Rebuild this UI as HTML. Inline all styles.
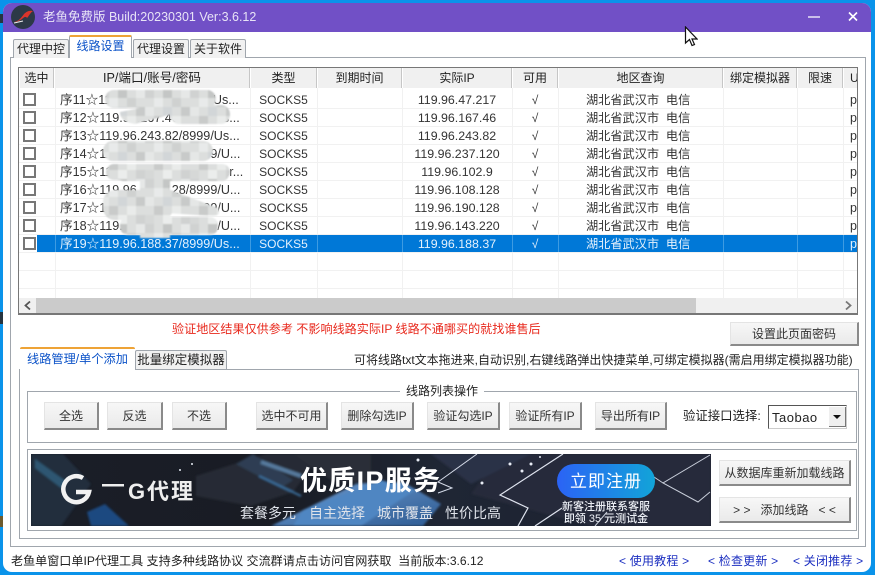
<!DOCTYPE html>
<html lang="zh"><head><meta charset="utf-8"><title>老鱼免费版</title>
<style>
*{box-sizing:border-box}
html,body{margin:0;padding:0}
body{width:875px;height:575px;overflow:hidden;position:relative;background:#0a93ea;font:12px "Liberation Sans","Noto Sans CJK SC",sans-serif;color:#222}
div,span{position:absolute;white-space:nowrap}
#win{left:3px;top:3px;width:868px;height:569px;background:#fff;border-radius:9px;overflow:hidden}
#title{left:0;top:0;width:868px;height:29px;background:#7150c6;color:#e8e4f6;font-size:13px;line-height:29px}
.box{border:1px solid #a0a6ad;background:#fff}
.tab{border:1px solid #a0a6ad;border-bottom:0;background:#f1f1f1;text-align:center;font-size:12px;line-height:19px;border-radius:2px 2px 0 0}
.act{background:#fff;color:#0b52c8;border-top:2px solid #eea336}
.hd{top:68px;height:20px;background:#f0f0f0;border-right:1px solid #c6c6c6;border-left:1px solid #fff;text-align:center;line-height:21px;font-size:12px}
.v{top:88px;width:1px;height:210px;background:#f1f1f1}
.h{left:19px;width:838px;height:1px;background:#f1f1f1}
.c{height:18px;line-height:18px;font-size:12px;color:#333}
.k{left:23px;width:13px;height:13px;border:2px solid #777;background:#fff}
.ip{left:60px;font-size:12.6px}.ty{left:250px;width:67px;text-align:center;font-size:12px}.ri{left:402px;width:110px;text-align:center;font-size:12.4px}
.ok{left:512px;width:46px;text-align:center}.ar{left:586px;font-size:12.2px}.p{left:850px;width:8px;overflow:hidden;font-size:12.5px}
.btn{background:linear-gradient(#f7f7f7,#eaeaea);border:1px solid #e4e4e4;border-right:2px solid #8a8a8a;border-bottom:2px solid #8a8a8a;text-align:center;font-size:12px;color:#333}
.b1{top:402px;height:28px;line-height:26px}
.lnk{top:553px;color:#1c2fc0;font-size:12px;line-height:16px;letter-spacing:.2px}
</style></head><body>
<div style="left:0;top:312px;width:3px;height:12px;background:#26343f"></div>
<div style="left:0;top:516px;width:3px;height:11px;background:#6d5a2d"></div>
<div style="left:0;top:14px;width:3px;height:9px;background:#26343f"></div>
<div id="win">
<div id="title"><span style="left:40px;top:0;font-size:12.5px">老鱼免费版 Build:20230301 Ver:3.6.12</span>
<div style="left:8px;top:2px;width:24px;height:24px;border-radius:50%;background:#2c3947"></div>
<svg style="position:absolute;left:8px;top:2px" width="24" height="24"><path d="M3 17C8 16 10 13 13 9C15 7 18 5 22 6C19 8 18 11 16 13C15 11 13 12 11 14C8 16 6 17 3 17Z" fill="#d9342b"/><path d="M3 18L12 16" stroke="#eee" stroke-width="1"/></svg>
<svg style="position:absolute;left:805px;top:7px" width="50" height="14"><path d="M0 7H12" stroke="#fff" stroke-width="1.2"/><path d="M41 2.500L49 10.500M49 2.500L41 10.500" stroke="#fff" stroke-width="1.6"/></svg>
</div></div>

<div class="box" style="left:10px;top:57px;width:856px;height:490px"></div>
<div class="tab" style="left:13px;top:39px;width:56px;height:19px">代理中控</div>
<div class="tab act" style="left:69px;top:35px;width:63px;height:23px;border-bottom:0">线路设置</div>
<div class="tab" style="left:133px;top:39px;width:56px;height:19px">代理设置</div>
<div class="tab" style="left:190px;top:39px;width:56px;height:19px">关于软件</div>

<div style="left:18px;top:67px;width:840px;height:248px;border:1px solid #777;border-bottom:2px solid #777;background:#fff"></div>
<div class="hd" style="left:19px;width:35px">选中</div>
<div class="hd" style="left:54px;width:196px;font-size:12.6px">IP/端口/账号/密码</div>
<div class="hd" style="left:250px;width:67px">类型</div>
<div class="hd" style="left:317px;width:85px">到期时间</div>
<div class="hd" style="left:402px;width:110px">实际IP</div>
<div class="hd" style="left:512px;width:46px">可用</div>
<div class="hd" style="left:558px;width:165px">地区查询</div>
<div class="hd" style="left:723px;width:74px">绑定模拟器</div>
<div class="hd" style="left:797px;width:46px">限速</div>
<div class="hd" style="left:843px;width:14px;border-right:0;text-align:left;padding-left:6px;overflow:hidden">U</div>

<div class="v" style="left:55px"></div><div class="v" style="left:250px"></div><div class="v" style="left:317px"></div><div class="v" style="left:402px"></div><div class="v" style="left:512px"></div><div class="v" style="left:558px"></div><div class="v" style="left:723px"></div><div class="v" style="left:797px"></div><div class="v" style="left:843px"></div>
<div class="h" style="top:108px"></div><div class="h" style="top:126px"></div><div class="h" style="top:144px"></div><div class="h" style="top:162px"></div><div class="h" style="top:180px"></div><div class="h" style="top:198px"></div><div class="h" style="top:216px"></div><div class="h" style="top:234px"></div><div class="h" style="top:252px"></div><div class="h" style="top:270px"></div><div class="h" style="top:288px"></div>

<div class="k" style="top:93px"></div><span class="c ip" style="top:91px">序11☆119.96.47.217/8999/Us...</span><span class="c ty" style="top:91px">SOCKS5</span><span class="c ri" style="top:91px">119.96.47.217</span><span class="c ok" style="top:91px">√</span><span class="c ar" style="top:91px">湖北省武汉市&nbsp; 电信</span><span class="c p" style="top:91px">p</span>
<div class="k" style="top:111px"></div><span class="c ip" style="top:109px">序12☆119.96.167.46/8999/Us...</span><span class="c ty" style="top:109px">SOCKS5</span><span class="c ri" style="top:109px">119.96.167.46</span><span class="c ok" style="top:109px">√</span><span class="c ar" style="top:109px">湖北省武汉市&nbsp; 电信</span><span class="c p" style="top:109px">p</span>
<div class="k" style="top:129px"></div><span class="c ip" style="top:127px">序13☆119.96.243.82/8999/Us...</span><span class="c ty" style="top:127px">SOCKS5</span><span class="c ri" style="top:127px">119.96.243.82</span><span class="c ok" style="top:127px">√</span><span class="c ar" style="top:127px">湖北省武汉市&nbsp; 电信</span><span class="c p" style="top:127px">p</span>
<div class="k" style="top:147px"></div><span class="c ip" style="top:145px">序14☆119.96.237.120/8999/U...</span><span class="c ty" style="top:145px">SOCKS5</span><span class="c ri" style="top:145px">119.96.237.120</span><span class="c ok" style="top:145px">√</span><span class="c ar" style="top:145px">湖北省武汉市&nbsp; 电信</span><span class="c p" style="top:145px">p</span>
<div class="k" style="top:165px"></div><span class="c ip" style="top:163px">序15☆119.96.102.9/8999/User...</span><span class="c ty" style="top:163px">SOCKS5</span><span class="c ri" style="top:163px">119.96.102.9</span><span class="c ok" style="top:163px">√</span><span class="c ar" style="top:163px">湖北省武汉市&nbsp; 电信</span><span class="c p" style="top:163px">p</span>
<div class="k" style="top:183px"></div><span class="c ip" style="top:181px">序16☆119.96.108.128/8999/U...</span><span class="c ty" style="top:181px">SOCKS5</span><span class="c ri" style="top:181px">119.96.108.128</span><span class="c ok" style="top:181px">√</span><span class="c ar" style="top:181px">湖北省武汉市&nbsp; 电信</span><span class="c p" style="top:181px">p</span>
<div class="k" style="top:201px"></div><span class="c ip" style="top:199px">序17☆119.96.190.128/8999/U...</span><span class="c ty" style="top:199px">SOCKS5</span><span class="c ri" style="top:199px">119.96.190.128</span><span class="c ok" style="top:199px">√</span><span class="c ar" style="top:199px">湖北省武汉市&nbsp; 电信</span><span class="c p" style="top:199px">p</span>
<div class="k" style="top:219px"></div><span class="c ip" style="top:217px">序18☆119.96.143.220/8999/U...</span><span class="c ty" style="top:217px">SOCKS5</span><span class="c ri" style="top:217px">119.96.143.220</span><span class="c ok" style="top:217px">√</span><span class="c ar" style="top:217px">湖北省武汉市&nbsp; 电信</span><span class="c p" style="top:217px">p</span>
<div style="left:37px;top:235px;width:820px;height:17px;background:#0078d7"></div>
<div style="left:55px;top:235px;width:1px;height:17px;background:#3d9be2"></div><div style="left:250px;top:235px;width:1px;height:17px;background:#3d9be2"></div><div style="left:317px;top:235px;width:1px;height:17px;background:#3d9be2"></div><div style="left:402px;top:235px;width:1px;height:17px;background:#3d9be2"></div><div style="left:512px;top:235px;width:1px;height:17px;background:#3d9be2"></div><div style="left:558px;top:235px;width:1px;height:17px;background:#3d9be2"></div><div style="left:723px;top:235px;width:1px;height:17px;background:#3d9be2"></div><div style="left:797px;top:235px;width:1px;height:17px;background:#3d9be2"></div><div style="left:843px;top:235px;width:1px;height:17px;background:#3d9be2"></div>
<div class="k" style="top:237px"></div>
<span class="c ip" style="top:235px;color:#e4f1fc">序19☆119.96.188.37/8999/Us...</span><span class="c ty" style="top:235px;color:#e4f1fc">SOCKS5</span><span class="c ri" style="top:235px;color:#e4f1fc">119.96.188.37</span><span class="c ok" style="top:235px;color:#e4f1fc">√</span><span class="c ar" style="top:235px;color:#e4f1fc">湖北省武汉市&nbsp; 电信</span><span class="c p" style="top:235px;color:#e4f1fc">p</span>

<svg style="position:absolute;left:0;top:0" width="875" height="260">
<defs>
<pattern id="m" width="45" height="45" patternUnits="userSpaceOnUse" x="100" y="89">
<rect width="45" height="45" fill="#dcdedd"/>
<rect x="0" y="0" width="9" height="9" fill="#d0d2d1"/><rect x="18" y="0" width="9" height="9" fill="#c4c6c5"/><rect x="36" y="0" width="9" height="9" fill="#e6e8e7"/>
<rect x="9" y="9" width="9" height="9" fill="#e8eaea"/><rect x="27" y="9" width="9" height="9" fill="#cfd1d0"/>
<rect x="0" y="18" width="9" height="9" fill="#e5e7e6"/><rect x="18" y="18" width="9" height="9" fill="#d2d6d8"/><rect x="36" y="18" width="9" height="9" fill="#c8cac9"/>
<rect x="9" y="27" width="9" height="9" fill="#c9cbca"/><rect x="27" y="27" width="9" height="9" fill="#e9ebea"/>
<rect x="0" y="36" width="9" height="9" fill="#d6d8d7"/><rect x="18" y="36" width="9" height="9" fill="#ebedec"/><rect x="36" y="36" width="9" height="9" fill="#d0d2d1"/>
</pattern>
<filter id="bl"><feGaussianBlur stdDeviation="0.7"/></filter>
</defs>
<g fill="url(#m)" filter="url(#bl)">
<rect x="105" y="90" width="111" height="18" rx="9"/>
<rect x="128" y="100" width="60" height="8" rx="4"/>
<path d="M120 112L170 102L180 112L135 124Q120 122 120 112Z"/>
<rect x="170" y="105" width="60" height="19" rx="9"/>
<rect x="103" y="141" width="110" height="20" rx="10"/>
<rect x="106" y="164" width="124" height="16" rx="8"/>
<rect x="118" y="170" width="110" height="11" rx="5"/>
<rect x="140" y="178" width="30" height="60"/>
<rect x="103" y="190" width="70" height="30" rx="12"/>
<path d="M160 186L218 208Q222 216 212 216L150 212Z"/>
<rect x="120" y="217" width="98" height="18" rx="8"/>
</g>
</svg>

<div style="left:19px;top:298px;width:838px;height:15px;background:#f0f0f0"></div>
<div style="left:36px;top:298px;width:660px;height:15px;background:#cbcbcb"></div>
<svg style="position:absolute;left:19px;top:298px" width="838" height="15"><path d="M11 3.500L6.500 7.500L11 11.500" fill="none" stroke="#555" stroke-width="1.8"/><path d="M827 3.500L831.500 7.500L827 11.500" fill="none" stroke="#777" stroke-width="1.8"/></svg>

<span style="left:172px;top:321px;color:#e8281c;font-size:12.1px;line-height:16px">验证地区结果仅供参考 不影响线路实际IP 线路不通哪买的就找谁售后</span>
<div class="btn" style="left:730px;top:322px;width:129px;height:24px;line-height:22px">设置此页面密码</div>

<div class="box" style="left:19px;top:369px;width:840px;height:170px"></div>
<div class="tab act" style="left:20px;top:347px;width:115px;height:23px;line-height:20px;border-right:0;border-left:0;font-size:12.2px">线路管理/单个添加</div>
<div class="tab" style="left:135px;top:350px;width:92px;height:19px;font-size:12.5px;line-height:18px">批量绑定模拟器</div>
<span style="left:354px;top:352px;line-height:16px;font-size:12px">可将线路txt文本拖进来,自动识别,右键线路弹出快捷菜单,可绑定模拟器(需启用绑定模拟器功能)</span>

<div class="box" style="left:27px;top:391px;width:830px;height:52px"></div>
<span style="left:400px;top:384px;background:#fff;padding:0 6px;line-height:15px;font-size:12px">线路列表操作</span>
<div class="btn b1" style="left:44px;width:55px">全选</div>
<div class="btn b1" style="left:107px;width:56px">反选</div>
<div class="btn b1" style="left:172px;width:55px">不选</div>
<div class="btn b1" style="left:256px;width:72px">选中不可用</div>
<div class="btn b1" style="left:341px;width:73px">删除勾选IP</div>
<div class="btn b1" style="left:427px;width:73px">验证勾选IP</div>
<div class="btn b1" style="left:509px;width:73px">验证所有IP</div>
<div class="btn b1" style="left:595px;width:72px">导出所有IP</div>
<span style="left:683px;top:408px;line-height:16px;font-size:12.4px">验证接口选择:</span>
<div style="left:768px;top:405px;width:79px;height:24px;border:1px solid #555;border-right-color:#ccc;border-bottom-color:#ccc;background:#fff;font-size:13px;line-height:24px;padding-left:3px;letter-spacing:.5px">Taobao</div>
<div style="left:829px;top:407px;width:17px;height:20px;background:#efefef;border-right:1px solid #777;border-bottom:1px solid #777"></div>
<svg style="position:absolute;left:833px;top:415px" width="10" height="6"><path d="M0 0H8L4 4Z" fill="#111"/></svg>

<div class="box" style="left:27px;top:449px;width:830px;height:82px"></div>
<svg style="position:absolute;left:31px;top:454px" width="680" height="72" viewBox="0 0 680 72">
<defs>
<linearGradient id="bg" x1="0" x2="1"><stop offset="0" stop-color="#1a1e28"/><stop offset=".35" stop-color="#191c24"/><stop offset=".6" stop-color="#1f2634"/><stop offset="1" stop-color="#1b2030"/></linearGradient>
<linearGradient id="reg" x1="0" x2="1"><stop offset="0" stop-color="#2b63f5"/><stop offset="1" stop-color="#12a4d8"/></linearGradient>
<linearGradient id="blu" x1="0" y1="0" x2="1" y2="1"><stop offset="0" stop-color="#6f9bcf"/><stop offset="1" stop-color="#2e5c94"/></linearGradient>
<filter id="sb"><feGaussianBlur stdDeviation="1"/></filter>
</defs>
<rect width="680" height="72" fill="url(#bg)"/>
<g filter="url(#sb)">
<path d="M0 0H32L60 30L30 72H0Z" fill="#212e3d"/>
<path d="M4 5L36 28L30 34L4 14Z" fill="#2d5672"/>
<path d="M56 58L74 50L98 72H60Z" fill="#1c4a80"/>
<path d="M165 22L235 0H290L262 38L220 52L165 42Z" fill="#262a34"/>
<path d="M222 0L262 26L250 34L205 10Z" fill="#2e3e52"/>
<path d="M228 22L270 42" stroke="#3a6f9e" stroke-width="2"/>
<path d="M230 8L270 22" stroke="#567a9e" stroke-width="4"/>
<path d="M262 0H340V30L300 26Z" fill="#2a2d37"/>
<path d="M240 72L325 30L372 28L410 50L392 72Z" fill="url(#blu)"/>
<path d="M272 56L350 26L384 36L330 72H262Z" fill="#4f86c2"/>
<path d="M470 0L680 0V72L560 72L440 40Z" fill="#252b3a"/>
<path d="M400 0L500 0L440 30Z" fill="#2a3346"/>
</g>
<path d="M446 0L407 28L421 34L407 39" stroke="#d5dbe8" stroke-width="1" fill="none"/>
<path d="M532 0L469 41L497 54L487 72M504 72L531 54" stroke="#dfe4ef" stroke-width="1.200" fill="none"/>
<path d="M679 1L632 29L667 48L679 38M623 23L632 29M564 72L576 58" stroke="#c9cfdb" stroke-width="1" fill="none"/>
<g fill="#e8ecf5"><circle cx="387" cy="6" r="1.500"/><circle cx="451" cy="29" r="1.500"/><circle cx="479" cy="10" r="1.500"/><circle cx="500" cy="10" r="1.500"/><circle cx="491" cy="17" r="1.500"/><circle cx="509" cy="3" r="1"/><circle cx="161" cy="10" r="1"/><circle cx="149" cy="16" r="1"/></g>
<path d="M52 24A13 13 0 1 0 58 38H45" fill="none" stroke="#f2f2f2" stroke-width="4.500"/>
<rect x="71" y="30" width="22" height="2.500" fill="#eee"/>
<text x="97" y="45" font-family="Liberation Sans,Noto Sans CJK SC,sans-serif" font-weight="700" font-size="22" fill="#eee" textLength="65">G代理</text>
<text x="269" y="36" font-family="Liberation Sans,Noto Sans CJK SC,sans-serif" font-weight="700" font-size="27" fill="#fff" textLength="140">优质IP服务</text>
<g font-family="Liberation Sans,Noto Sans CJK SC,sans-serif" font-size="14" fill="#dfe3ea"><text x="209" y="64">套餐多元</text><text x="278" y="64">自主选择</text><text x="346" y="64">城市覆盖</text><text x="414" y="64">性价比高</text></g>
<rect x="526" y="10" width="98" height="34" rx="17" fill="url(#reg)"/>
<text x="575" y="33" text-anchor="middle" font-family="Liberation Sans,Noto Sans CJK SC,sans-serif" font-size="17" fill="#fff" letter-spacing="1">立即注册</text>
<g font-family="Liberation Sans,Noto Sans CJK SC,sans-serif" font-size="11" font-weight="500" fill="#eceff5" text-anchor="middle"><text x="575" y="56">新客注册联系客服</text><text x="575" y="68">即领 35 元测试金</text></g>
</svg>
<div class="btn" style="left:719px;top:460px;width:132px;height:26px;line-height:24px">从数据库重新加载线路</div>
<div class="btn" style="left:719px;top:497px;width:132px;height:26px;line-height:24px">&gt;&nbsp;&gt;&nbsp;&nbsp;&nbsp;添加线路&nbsp;&nbsp;&nbsp;&lt;&nbsp;&lt;</div>

<span style="left:11px;top:553px;line-height:16px;font-size:12.08px;color:#222">老鱼单窗口单IP代理工具 支持多种线路协议 交流群请点击访问官网获取&nbsp; 当前版本:3.6.12</span>
<span class="lnk" style="left:619px">&lt; 使用教程 &gt;</span>
<span class="lnk" style="left:708px">&lt; 检查更新 &gt;</span>
<span class="lnk" style="left:793px">&lt; 关闭推荐 &gt;</span>

<svg style="position:absolute;left:684px;top:26px" width="14" height="22"><path d="M1.500 1V17L5.500 13.500L8 19.500L10.500 18.500L8 13H13Z" fill="#fff" stroke="#111" stroke-width="1.200"/></svg>
</body></html>
